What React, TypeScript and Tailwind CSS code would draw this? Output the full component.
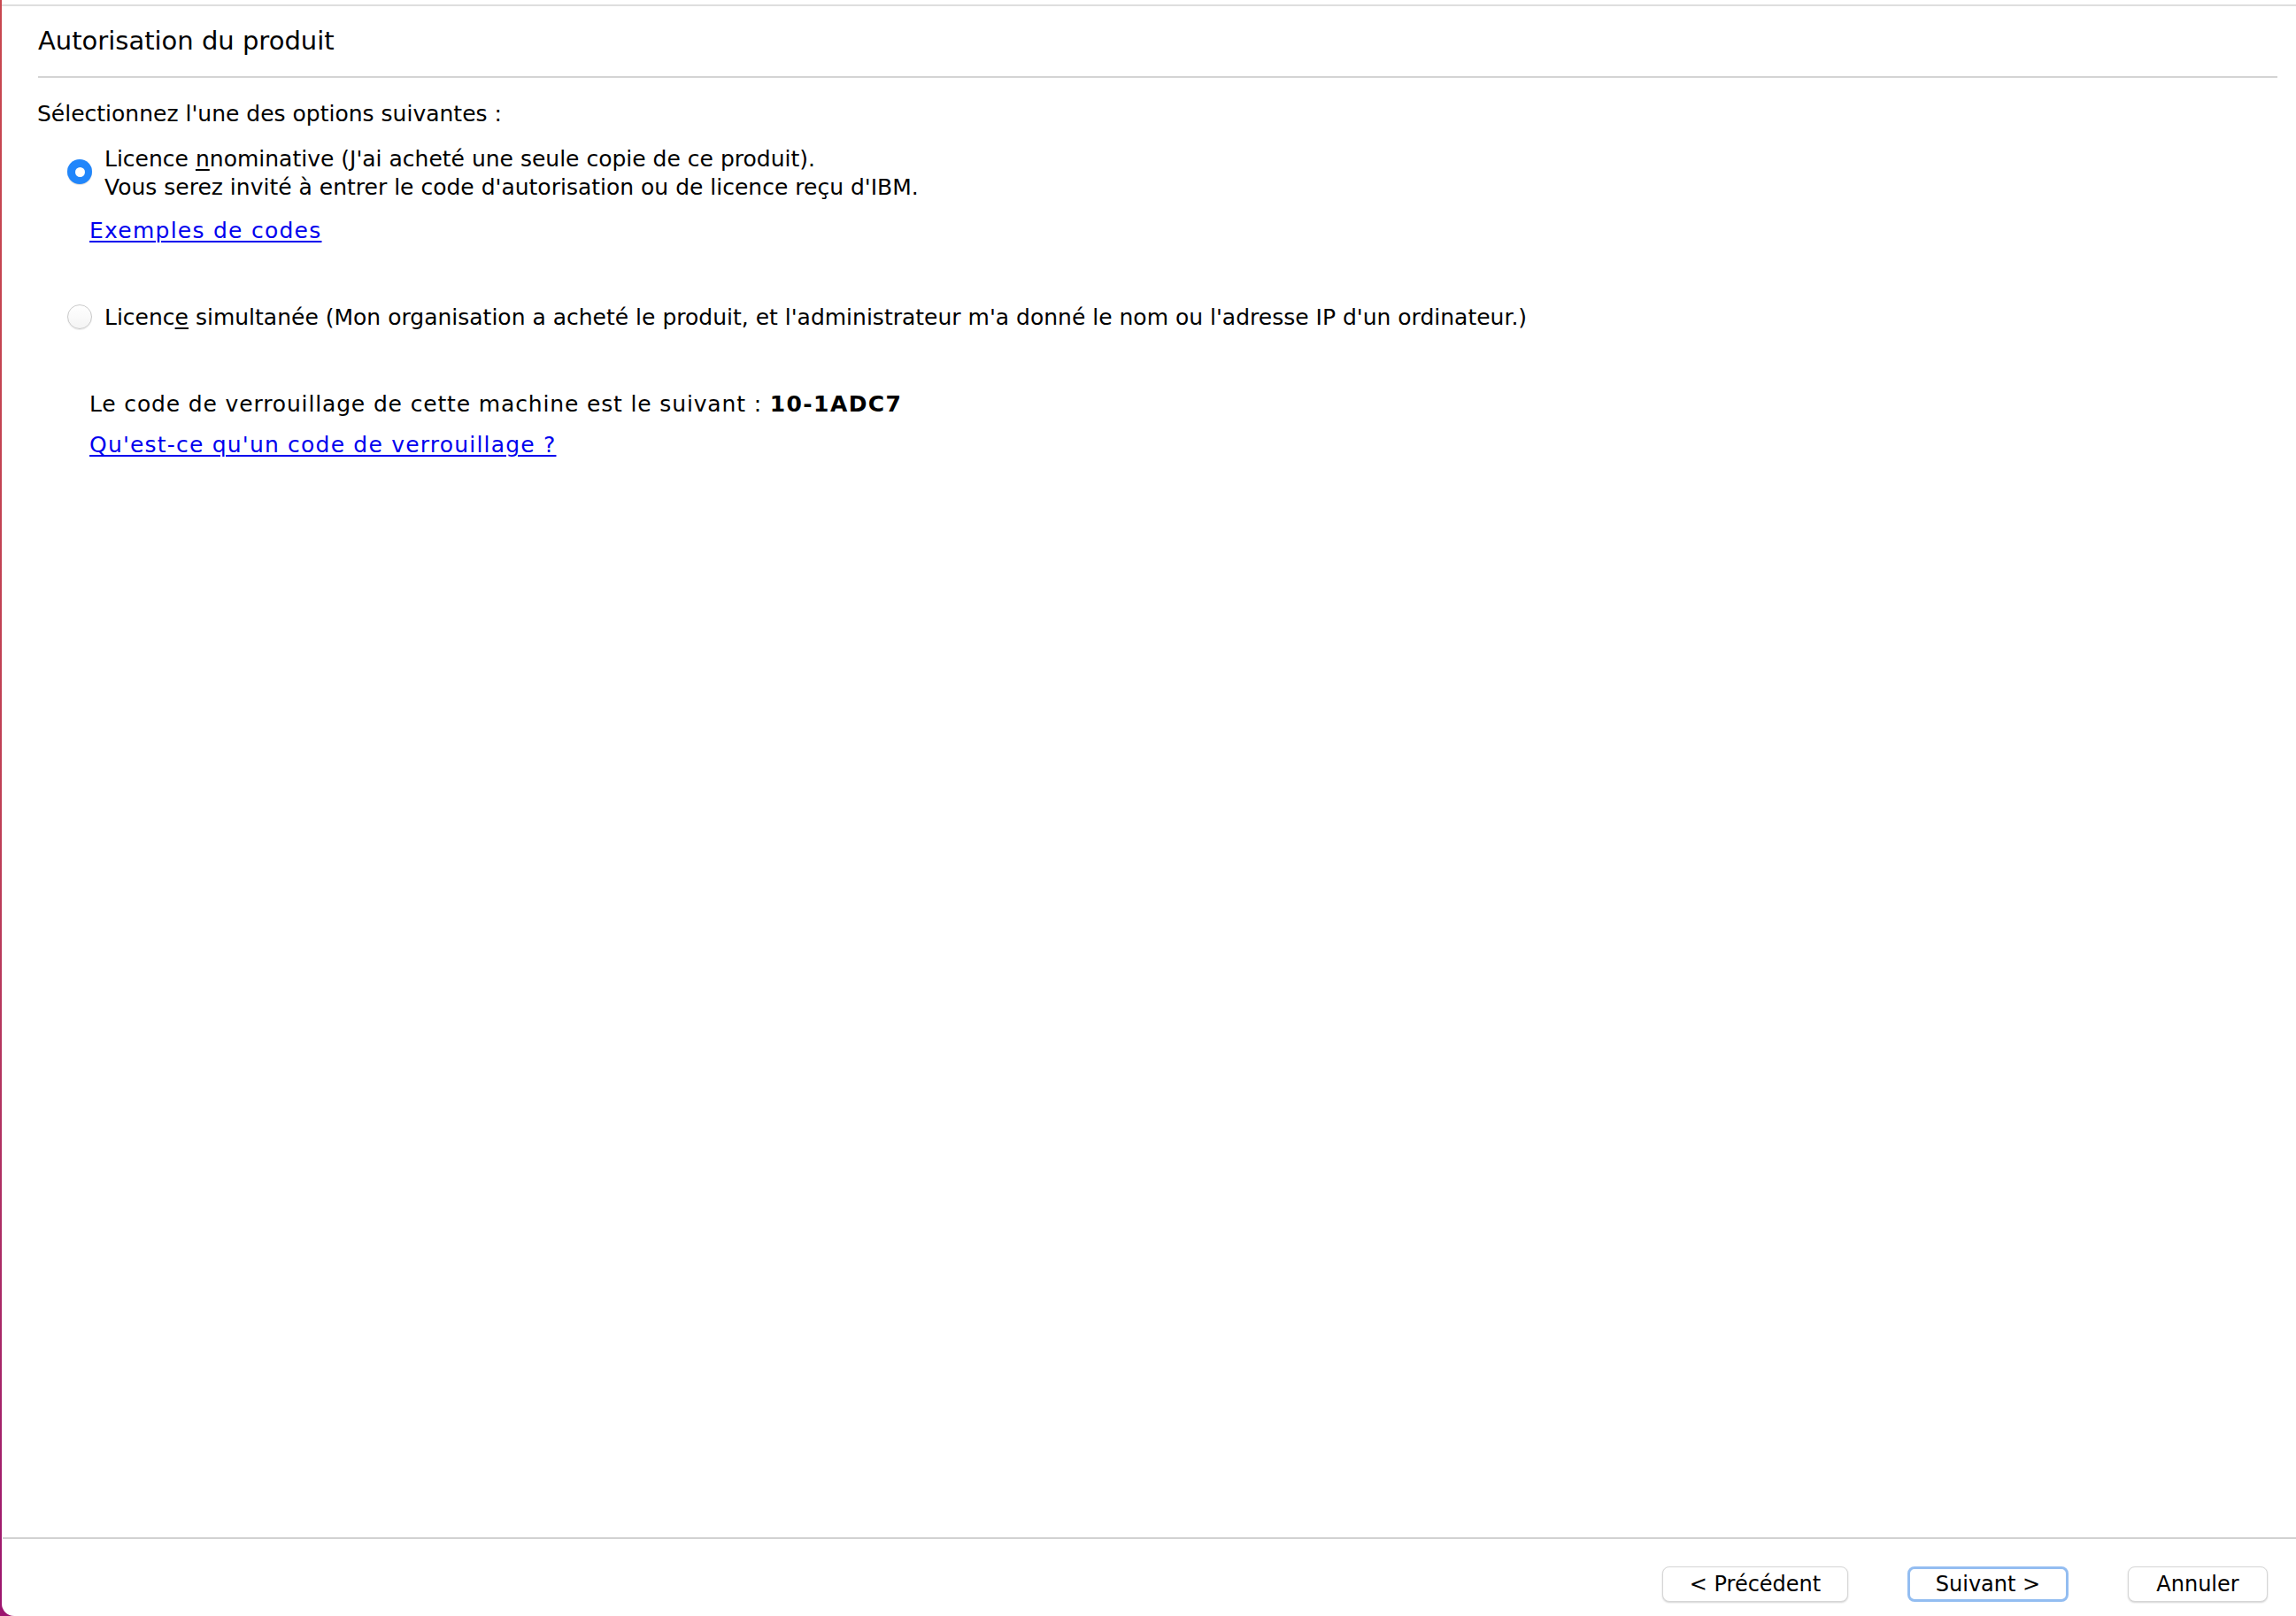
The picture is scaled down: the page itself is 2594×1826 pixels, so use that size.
import React from "react";

function RadioOn() {
  return (
    <div className="w-[28px] h-[28px] shrink-0 rounded-full bg-[#2186fb] flex items-center justify-center shadow-[0_1px_1px_rgba(0,0,0,0.15)]">
      <div className="w-[11px] h-[11px] rounded-full bg-white" />
    </div>
  );
}

function RadioOff() {
  return (
    <div className="w-[28px] h-[28px] shrink-0 rounded-full bg-linear-to-b from-white to-[#f4f4f4] border border-[#c9c9c9] shadow-[0_1px_1px_rgba(0,0,0,0.08)]" />
  );
}

function Btn({ label, focused }: { label: string; focused?: boolean }) {
  return (
    <div
      className={
        focused
          ? "h-[40px] w-[182px] flex items-center justify-center rounded-[8px] bg-white border-[3px] border-[#93bdf1] text-[24px] leading-[30px] text-black"
          : "h-[40px] flex items-center justify-center rounded-[8px] bg-white border border-[#d6d6d6] shadow-[0_1px_2px_rgba(0,0,0,0.18)] text-[24px] leading-[30px] text-black"
      }
    >
      {label}
    </div>
  );
}

export default function App() {
  return (
    <div className="h-screen w-full bg-linear-to-b from-[#c8474f] via-[#bf3f55] to-[#9c146f] flex font-['DejaVu_Sans',sans-serif] text-black">
      <div className="ml-[2px] flex-1 h-full bg-white rounded-bl-[14px] flex flex-col">
        <div className="h-[2px] mt-[5px] bg-[#dedede]" />
        <div className="pl-[41px] pr-[21px]">
          <div className="mt-[21px] text-[29px] leading-[36px]">Autorisation du produit</div>
          <div className="mt-[22px] h-[2px] bg-[#d4d4d4]" />
        </div>
        <div className="pl-[40px] flex flex-col items-start text-[25px] leading-[32px]">
          <div className="mt-[25px]">Sélectionnez l'une des options suivantes :</div>
          <div className="mt-[19px] flex items-start">
            <div className="ml-[34px] mt-[16px]">
              <RadioOn />
            </div>
            <div className="ml-[14px]">
              <div>
                Licence <span className="underline decoration-[2px] underline-offset-[3px]">n</span>nominative (J'ai acheté une seule copie de ce produit).
              </div>
              <div>Vous serez invité à entrer le code d'autorisation ou de licence reçu d'IBM.</div>
            </div>
          </div>
          <div className="mt-[17px] ml-[59px] tracking-[1.25px] text-[#0000ee] underline decoration-[2px] underline-offset-[3px]">
            Exemples de codes
          </div>
          <div className="mt-[66px] flex items-start">
            <div className="ml-[34px] mt-[1px]">
              <RadioOff />
            </div>
            <div className="ml-[14px]">
              Licenc<span className="underline decoration-[2px] underline-offset-[3px]">e</span> simultanée (Mon organisation a acheté le produit, et l'administrateur m'a donné le nom ou l'adresse IP d'un ordinateur.)
            </div>
          </div>
          <div className="mt-[66px] ml-[59px] tracking-[0.85px]">
            Le code de verrouillage de cette machine est le suivant : <span className="font-bold tracking-[1.4px]">10-1ADC7</span>
          </div>
          <div className="mt-[14px] ml-[59px] tracking-[1.2px] text-[#0000ee] underline decoration-[2px] underline-offset-[3px]">
            Qu'est-ce qu'un code de verrouillage ?
          </div>
        </div>
        <div className="flex-1" />
        <div className="ml-[1px] h-[2px] bg-[#d2d2d2]" />
        <div className="mt-[31px] mb-[16px] flex justify-end gap-[67px] pr-[32px]">
          <div className="w-[210px]">
            <Btn label="< Précédent" />
          </div>
          <Btn label="Suivant >" focused />
          <div className="w-[158px]">
            <Btn label="Annuler" />
          </div>
        </div>
      </div>
    </div>
  );
}
